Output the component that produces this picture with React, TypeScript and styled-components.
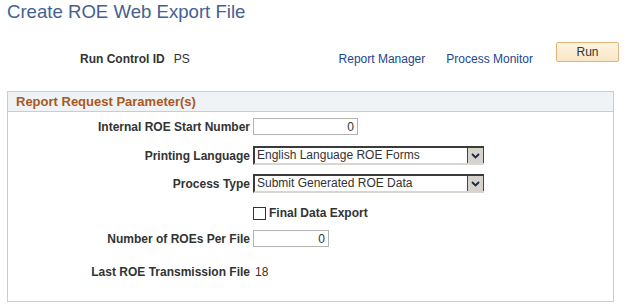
import React from "react";
import styled, { createGlobalStyle } from "styled-components";

const Global = createGlobalStyle`
  html, body { margin: 0; padding: 0; background: #fff; }
  body { font-family: Arial, "Liberation Sans", sans-serif; font-size: 12px; color: #333; }
`;

const Page = styled.div`
  padding: 0 7px;
  width: 626px;
  box-sizing: border-box;
`;

const Title = styled.h1`
  margin: 0;
  font-family: Arial, "Liberation Sans", sans-serif;
  font-weight: normal;
  font-size: 18.6px;
  line-height: 23px;
  color: #43628f;
`;

const Toolbar = styled.div`
  display: flex;
  align-items: flex-start;
  margin-top: 19px;
  padding-left: 73px;
`;

const TextItem = styled.span<{ $bold?: boolean; $ml?: number }>`
  padding-top: 10px;
  line-height: 14px;
  font-size: 12px;
  font-weight: ${(p) => (p.$bold ? "bold" : "normal")};
  margin-left: ${(p) => p.$ml ?? 0}px;
  color: #333;
`;

const Spacer = styled.div`
  flex: 1;
`;

const Link = styled.a`
  padding-top: 10px;
  line-height: 14px;
  font-size: 12px;
  color: #214590;
  text-decoration: none;
  margin-right: 21px;
  cursor: pointer;
`;

const RunButton = styled.button`
  width: 63px;
  height: 20px;
  margin-left: 2px;
  border: 1px solid #e2b577;
  border-radius: 2px;
  background: linear-gradient(#fdf4e3, #fbe6c4);
  font-family: Arial, "Liberation Sans", sans-serif;
  font-size: 12px;
  color: #333;
  padding: 0;
`;

const GroupBox = styled.section`
  margin-top: 25px;
  width: 607px;
  box-sizing: border-box;
  border: 1px solid #c9ccd2;
`;

const GroupHeader = styled.div`
  height: 20px;
  box-sizing: border-box;
  background: #eff3f6;
  border-bottom: 1px solid #c9ccd2;
  padding-left: 8px;
  font-size: 13px;
  font-weight: bold;
  line-height: 19px;
  color: #a9581e;
`;

const GroupBody = styled.div`
  padding-bottom: 6px;
`;

const Row = styled.div<{ $h: number }>`
  display: grid;
  grid-template-columns: 242px 1fr;
  column-gap: 3px;
  align-items: center;
  height: ${(p) => p.$h}px;
`;

const Label = styled.label`
  text-align: right;
  font-weight: bold;
  font-size: 12px;
  color: #333;
  white-space: nowrap;
`;

const Value = styled.span`
  font-size: 12px;
  color: #333;
  padding-left: 2px;
`;

const NumInput = styled.input<{ $w: number }>`
  width: ${(p) => p.$w}px;
  height: 17px;
  box-sizing: border-box;
  border: 1px solid #b4b4b4;
  padding: 0 3px;
  text-align: right;
  font-family: Arial, "Liberation Sans", sans-serif;
  font-size: 12px;
  color: #333;
  outline: none;
`;

const SelectBox = styled.div`
  width: 231px;
  height: 19px;
  box-sizing: border-box;
  display: flex;
  border-top: 2px solid #3a3a3a;
  border-left: 2px solid #3a3a3a;
  border-bottom: 2px solid #d8d6d0;
  background: #fff;
`;

const SelectText = styled.span`
  flex: 1;
  padding-left: 2px;
  font-size: 12px;
  line-height: 15px;
  color: #333;
  white-space: nowrap;
`;

const DropButton = styled.span`
  width: 17px;
  box-sizing: border-box;
  background: #d6d3cc;
  border-left: 1px solid #444;
  border-right: 1px solid #444;
  display: flex;
  align-items: center;
  justify-content: center;
`;

const CheckWrap = styled.div`
  display: flex;
  align-items: center;
  gap: 3px;
  padding-top: 1px;
`;

const CheckBox = styled.span`
  width: 13px;
  height: 13px;
  box-sizing: border-box;
  border: 1px solid #333;
  background: #fff;
`;

const CheckLabel = styled.span`
  font-weight: bold;
  font-size: 12px;
  color: #333;
`;

const Chevron = () => (
  <svg width="9" height="6" viewBox="0 0 9 6">
    <path d="M1 1 L4.5 4.5 L8 1" fill="none" stroke="#1c2a4a" strokeWidth="1.8" />
  </svg>
);

const Select = ({ value }: { value: string }) => (
  <SelectBox>
    <SelectText>{value}</SelectText>
    <DropButton>
      <Chevron />
    </DropButton>
  </SelectBox>
);

export default function App() {
  return (
    <>
      <Global />
      <Page>
        <Title>Create ROE Web Export File</Title>
        <Toolbar>
          <TextItem $bold>Run Control ID</TextItem>
          <TextItem $ml={9}>PS</TextItem>
          <Spacer />
          <Link>Report Manager</Link>
          <Link>Process Monitor</Link>
          <RunButton>Run</RunButton>
        </Toolbar>
        <GroupBox>
          <GroupHeader>Report Request Parameter(s)</GroupHeader>
          <GroupBody>
            <Row $h={29}>
              <Label>Internal ROE Start Number</Label>
              <div>
                <NumInput $w={105} defaultValue="0" />
              </div>
            </Row>
            <Row $h={29}>
              <Label>Printing Language</Label>
              <Select value="English Language ROE Forms" />
            </Row>
            <Row $h={27}>
              <Label>Process Type</Label>
              <Select value="Submit Generated ROE Data" />
            </Row>
            <Row $h={31}>
              <span />
              <CheckWrap>
                <CheckBox />
                <CheckLabel>Final Data Export</CheckLabel>
              </CheckWrap>
            </Row>
            <Row $h={21}>
              <Label>Number of ROEs Per File</Label>
              <div>
                <NumInput $w={76} defaultValue="0" />
              </div>
            </Row>
            <Row $h={46}>
              <Label>Last ROE Transmission File</Label>
              <Value>18</Value>
            </Row>
          </GroupBody>
        </GroupBox>
      </Page>
    </>
  );
}
